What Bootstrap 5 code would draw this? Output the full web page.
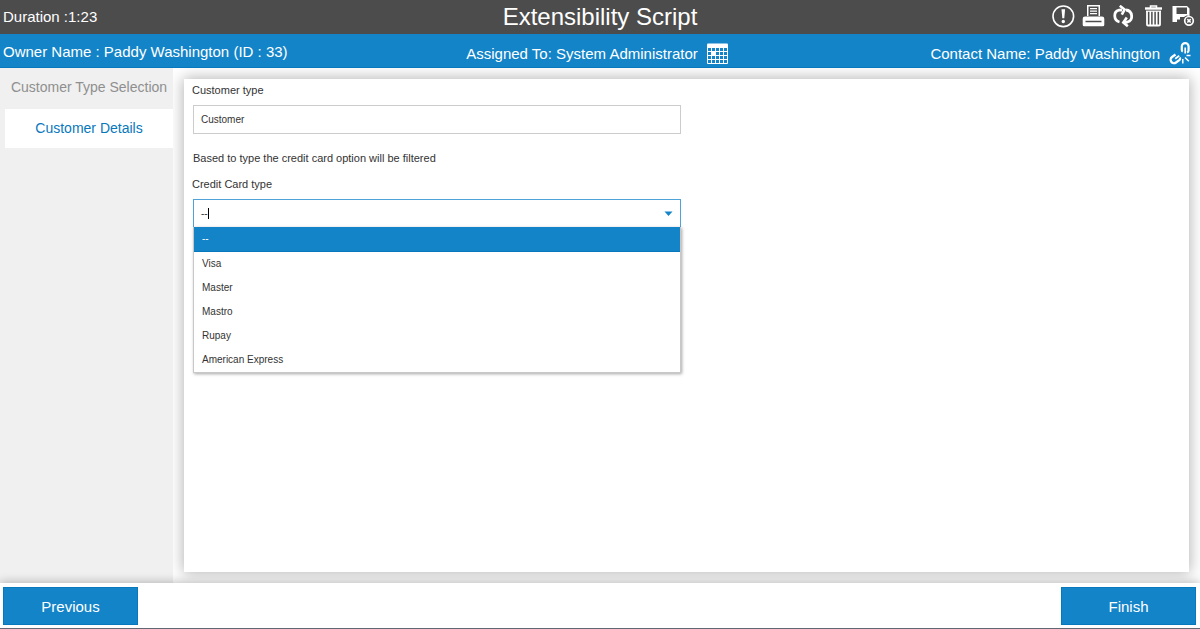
<!DOCTYPE html>
<html lang="en">
<head>
<meta charset="utf-8">
<meta name="viewport" content="width=device-width, initial-scale=1">
<title>Extensibility Script</title>
<link href="https://cdn.jsdelivr.net/npm/bootstrap@5.3.0/dist/css/bootstrap.min.css" rel="stylesheet">
<style>
  :root { --brand: #1384c8; --brand-dark: #0878bc; --ink: #333; }
  body { font-family: "Liberation Sans", Arial, sans-serif; font-size: 15px; line-height: 20px; color: var(--ink); background: #fff; }
  .title-bar { height: 34px; background: #4c4c4c; color: #fff; }
  .info-bar { height: 34px; background: var(--brand); border-bottom: 1px solid var(--brand-dark); color: #fff; padding-top: 6px; }
  .bar-side { flex: 1 1 0; padding-left: 3px; }
  .script-title { font-size: 24px; line-height: 30px; font-weight: 400; }
  .icon-group { gap: 6px; padding-right: 5px; }
  .icon-btn { width: 24px; height: 24px; padding: 0; border: 0; background: none; color: #fff; line-height: 0; }
  .icon-btn svg { width: 24px; height: 24px; }
  .steps { width: 173px; background: #f0f0f0; padding-left: 5px; }
  .step-link { height: 39px; padding-bottom: 2px; font-size: 14px; color: #8f8f8f; text-decoration: none; white-space: nowrap; }
  .step-link.current { background: #fff; color: var(--brand-dark); margin-top: 2px; }
  .work-area { padding: 11px; overflow: hidden; }
  .sheet { background: #fff; box-shadow: 0 0 14px 1px rgba(0,0,0,.3); padding: 3px 9px; font-size: 11px; line-height: 16px; }
  .form-col { width: 488px; max-width: 100%; }
  .form-col label { margin: 0 0 7px -1px; }
  .hint { margin: 16px 0 10px; }
  .field { height: 29px; padding: 0 7px; border: 1px solid #ccc; border-radius: 0; font-size: 10px; color: var(--ink); background: #fff; }
  .field.open { border-color: #4fa3d8; }
  .arrow { right: 8px; top: 12px; width: 9px; height: 5px; line-height: 0; color: var(--brand); }
  .text-caret { left: 15px; top: 9px; width: 1px; height: 11px; background: #000; }
  .options { top: 28px; left: 0; right: 0; margin: 0; padding: 0; list-style: none; background: #fff; border: 1px solid #c8c8c8; border-top: 0; box-shadow: 1px 1px 3px rgba(0,0,0,.35); font-size: 10px; line-height: 24px; }
  .options li { padding: 0 8px; }
  .options li[aria-selected="true"] { background: var(--brand); color: #fff; border-bottom: 1px solid var(--brand-dark); }
  .action-bar { background: #fff; padding: 4px 4px 3px 3px; border-bottom: 1px solid #626873; box-shadow: 0 0 10px rgba(0,0,0,.3); z-index: 2; }
  .action-btn { width: 135px; height: 38px; border: 1px solid var(--brand-dark); border-radius: 0; background: var(--brand); color: #fff; font-size: 15px; line-height: 20px; padding: 2px 0 0; }
</style>
</head>
<body>
<div class="d-flex flex-column min-vh-100">
  <header>
    <div class="title-bar d-flex align-items-center">
      <div class="bar-side">Duration :1:23</div>
      <h1 class="script-title mb-0">Extensibility Script</h1>
      <div class="bar-side d-flex justify-content-end">
        <div class="icon-group d-flex">
          <button class="icon-btn" type="button" aria-label="Alert"><svg viewBox="0 0 24 24" fill="none" stroke="currentColor"><circle cx="12.300" cy="11.300" r="10.300" stroke-width="1.600"/><path d="M10.500 4.300h3.600l-.8 9h-2z" fill="currentColor" stroke="none"/><circle cx="12.300" cy="16.500" r="1.700" fill="currentColor" stroke="none"/></svg></button>
          <button class="icon-btn" type="button" aria-label="Print"><svg viewBox="0 0 24 24" fill="currentColor"><path fill-rule="evenodd" d="M6 0h13v11H6zM7.500 1.500v9.500h10V1.500z"/><path d="M9 3h7v1.200H9zM9 5.500h7v1.200H9zM9 8h7v1.200H9z"/><path fill-rule="evenodd" d="M4 11.500h17a2.300 2.300 0 0 1 2.300 2.300v6a1.500 1.500 0 0 1-1.500 1.500H3.200a1.500 1.500 0 0 1-1.500-1.500v-6a2.300 2.300 0 0 1 2.300-2.300zM4.500 15.800v1.500h16v-1.500z"/></svg></button>
          <button class="icon-btn" type="button" aria-label="Refresh"><svg viewBox="0 0 24 24" fill="none" stroke="currentColor" stroke-width="2.800"><path d="M8.500 17C2.500 15.500 2 6.500 8 5.200l3-.2"/><path d="M15 5C21.500 5.500 23 15.500 16.500 17l-3 .3"/><path d="M8.800 .800l4.800 3.700-2.800 5.200M15.800 12.500l-3.500 5 4.500 3.800" stroke-width="2.600"/></svg></button>
          <button class="icon-btn" type="button" aria-label="Delete"><svg viewBox="0 0 24 24" fill="none" stroke="currentColor"><path d="M4 3.500h17" stroke-width="2.400"/><path d="M9.500 3V.900h6V3" stroke-width="1.500"/><path d="M6 6v13.500q0 1 1 1h11q1 0 1-1V6" stroke-width="1.800"/><path d="M9.300 6v14M12.500 6v14M15.700 6v14" stroke-width="1.700"/><path d="M5 6.200h15" stroke-width="1.200"/></svg></button>
          <button class="icon-btn" type="button" aria-label="Save and close"><svg viewBox="0 0 24 24" fill="none" stroke="currentColor"><path fill-rule="evenodd" fill="currentColor" stroke="none" d="M1.500 1H16l2.500 2.500V11l-3-.5-2.500 1.500H9v2.500H6V17H1.500zM5.500 2.500v6.500H16V2.500z"/><circle cx="18" cy="15.800" r="4.300" stroke-width="1.700"/><path d="M16.300 14.100l3.400 3.400m0-3.400l-3.400 3.400" stroke-width="1.600"/></svg></button>
        </div>
      </div>
    </div>
    <div class="info-bar d-flex align-items-center">
      <div class="bar-side pb-1 pe-1">Owner Name : Paddy Washington (ID : 33)</div>
      <div class="d-flex align-items-center gap-2">Assigned To: System Administrator
        <button class="icon-btn" type="button" aria-label="Calendar"><svg viewBox="0 0 24 24" fill="none" stroke="currentColor"><path d="M1 2.500q0-1 1-1h19q1 0 1 1V6H1z" fill="currentColor" stroke="none"/><path d="M1.500 6v15.500h20V6M1.500 9.500h20M1.500 13.500h20M1.500 17.500h20M5.500 6v15.500M9.500 6v15.500M13.500 6v15.500M17.500 6v15.500"/><path d="M5.500 9.500h4v4h-4z" fill="currentColor"/></svg></button>
      </div>
      <div class="bar-side d-flex justify-content-end align-items-center gap-2 pe-2">Contact Name: Paddy Washington
        <button class="icon-btn" type="button" aria-label="Unlink contact"><svg viewBox="0 0 24 24" fill="none" stroke="currentColor"><path d="M14.800 9.500q-1-.5-1-1.800V4.500a3.300 3.300 0 0 1 6.800 0v4q0 1.300-1.500 2" stroke-width="2.200"/><path d="M17.200 5.500v6" stroke-width="1.700"/><path d="M7.500 12.500l-3.500 2.500a3.400 3.400 0 0 0 4 5.500l3.600-2.600q.900-1 .3-2.400" stroke-width="2.200"/><path d="M7.200 16.800l4-3" stroke-width="1.700"/><path d="M14.800 17v4.500M17 15.500l3.800 3.800M18.500 13.500h4" stroke-width="1.500"/></svg></button>
      </div>
    </div>
  </header>

  <div class="d-flex flex-grow-1">
    <nav class="steps flex-shrink-0 d-flex flex-column" aria-label="Script steps">
      <a class="step-link d-flex align-items-center justify-content-center" href="#type">Customer Type Selection</a>
      <a class="step-link current d-flex align-items-center justify-content-center" href="#details" aria-current="step">Customer Details</a>
    </nav>
    <main class="work-area flex-grow-1 d-flex">
      <form class="sheet flex-grow-1">
        <div class="form-col">
          <label for="ctype" class="d-block">Customer type</label>
          <input id="ctype" class="field form-control" type="text" value="Customer">
          <p class="hint">Based to type the credit card option will be filtered</p>
          <label for="card-type" class="d-block">Credit Card type</label>
          <div class="position-relative">
            <input id="card-type" class="field open form-control" type="text" role="combobox" aria-expanded="true" aria-controls="card-options" value="--">
            <span class="text-caret position-absolute"></span>
            <span class="arrow position-absolute"><svg width="9" height="5" viewBox="0 0 9 5"><path d="M.500 .500h8L4.500 5z" fill="currentColor"/></svg></span>
            <ul id="card-options" class="options position-absolute" role="listbox" aria-label="Credit Card type">
              <li role="option" aria-selected="true">--</li>
              <li role="option">Visa</li>
              <li role="option">Master</li>
              <li role="option">Mastro</li>
              <li role="option">Rupay</li>
              <li role="option">American Express</li>
            </ul>
          </div>
        </div>
      </form>
    </main>
  </div>

  <footer class="action-bar position-relative d-flex justify-content-between">
    <button class="action-btn btn" type="button">Previous</button>
    <button class="action-btn btn" type="button">Finish</button>
  </footer>
</div>
<script src="https://cdn.jsdelivr.net/npm/bootstrap@5.3.0/dist/js/bootstrap.bundle.min.js"></script>
</body>
</html>
